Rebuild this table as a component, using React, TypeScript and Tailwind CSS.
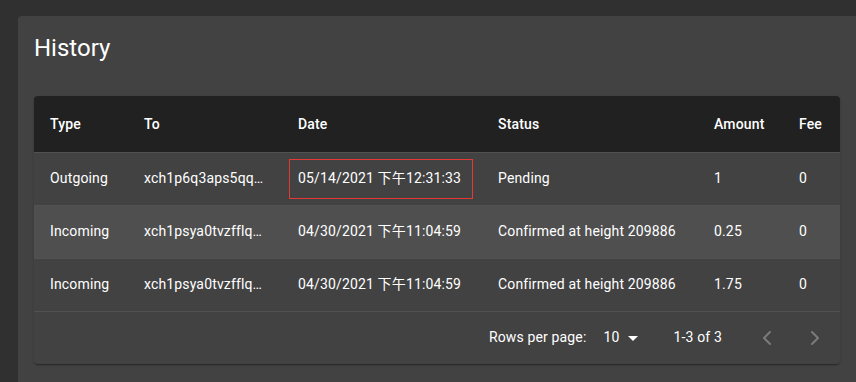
import { ChevronLeft, ChevronRight } from 'lucide-react';

type Tx = {
  type: string;
  to: string;
  date: string;
  status: string;
  amount: string;
  fee: string;
};

const rows: Tx[] = [
  { type: 'Outgoing', to: 'xch1p6q3aps5qqxyzlm0d9', date: '05/14/2021 下午12:31:33', status: 'Pending', amount: '1', fee: '0' },
  { type: 'Incoming', to: 'xch1psya0tvzfflqw8h2kd', date: '04/30/2021 下午11:04:59', status: 'Confirmed at height 209886', amount: '0.25', fee: '0' },
  { type: 'Incoming', to: 'xch1psya0tvzfflqw8h2kd', date: '04/30/2021 下午11:04:59', status: 'Confirmed at height 209886', amount: '1.75', fee: '0' },
];

export default function App() {
  return (
    <div
      className="min-h-[382px] bg-[#303030] pl-[18px] pt-[16px] text-white overflow-hidden"
      style={{ fontFamily: 'Roboto, "Noto Sans CJK SC", sans-serif' }}
    >
      <div className="bg-[#424242] rounded-tl-[4px] px-[16px] pt-[16px] pb-[20px] min-h-[366px]">
        <h2 className="text-[24px] leading-[32px] font-normal mb-[32px]">History</h2>

        {/* tabla */}
        <div className="rounded-[4px] overflow-hidden bg-[#424242] shadow-[0_2px_1px_-1px_rgba(0,0,0,0.2),0_1px_1px_0_rgba(0,0,0,0.14),0_1px_3px_0_rgba(0,0,0,0.12)]">
          <table className="w-full table-fixed border-collapse text-[14px] tracking-[0.01071em]">
            <colgroup>
              <col className="w-[94px]" />
              <col className="w-[154px]" />
              <col className="w-[200px]" />
              <col className="w-[216px]" />
              <col className="w-[85px]" />
              <col />
            </colgroup>
            <thead>
              <tr className="bg-[#212121] h-[56px] border-b border-[#515151]">
                {['Type', 'To', 'Date', 'Status', 'Amount', 'Fee'].map((h) => (
                  <th key={h} className="text-left font-medium px-[16px] leading-[24px]">
                    {h}
                  </th>
                ))}
              </tr>
            </thead>
            <tbody>
              {rows.map((r, i) => (
                <tr
                  key={i}
                  className={`h-[53px] border-b border-[#515151] ${i === 1 ? 'bg-[#4f4f4f]' : ''}`}
                >
                  <td className="px-[16px]">{r.type}</td>
                  <td className="px-[16px]">
                    <div className="truncate max-w-[122px]">{r.to}</div>
                  </td>
                  {i === 0 ? (
                    <td className="pl-[7px] pr-[16px]">
                      <div className="h-[40px] w-[184px] flex items-center px-[8px] border border-[#e53935] whitespace-nowrap">
                        {r.date}
                      </div>
                    </td>
                  ) : (
                    <td className="px-[16px] whitespace-nowrap">{r.date}</td>
                  )}
                  <td className="px-[16px] whitespace-nowrap">{r.status}</td>
                  <td className="px-[16px]">{r.amount}</td>
                  <td className="px-[16px]">{r.fee}</td>
                </tr>
              ))}
            </tbody>
          </table>

          {/* paginación */}
          <div className="h-[52px] flex items-center justify-end text-[14px] tracking-[0.01071em] pr-[13px]">
            <span>Rows per page:</span>
            <div className="ml-[17px] flex items-center">
              <span>10</span>
              <svg className="ml-[1px] w-[24px] h-[24px]" viewBox="0 0 24 24" fill="currentColor">
                <path d="M7 10l5 5 5-5z" />
              </svg>
            </div>
            <span className="ml-[29px]">1-3 of 3</span>
            <div className="ml-[33px] flex items-center gap-[24px] text-white/30">
              <ChevronLeft className="w-[24px] h-[24px]" strokeWidth={2} />
              <ChevronRight className="w-[24px] h-[24px]" strokeWidth={2} />
            </div>
          </div>
        </div>
      </div>
    </div>
  );
}
